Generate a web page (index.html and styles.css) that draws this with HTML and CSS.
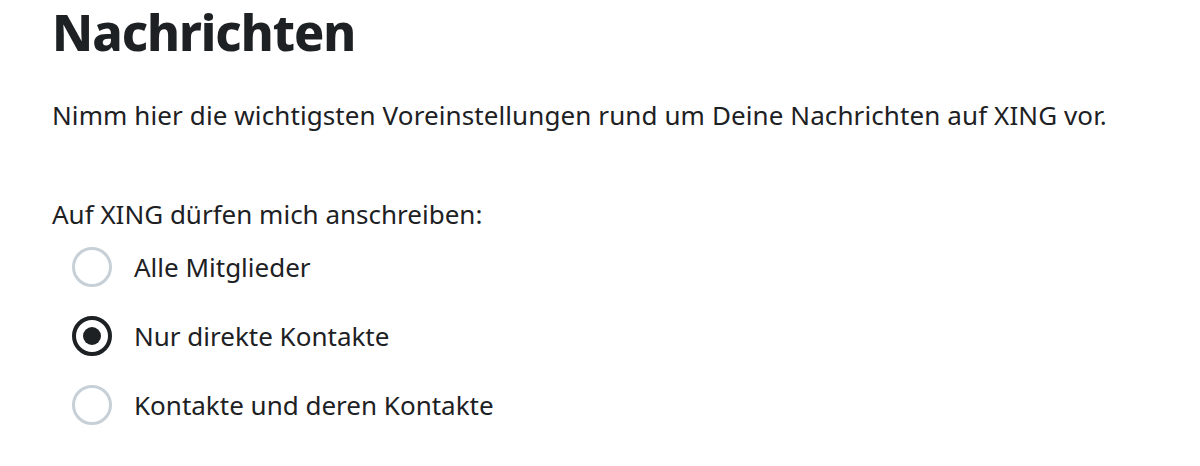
FILE: index.html
```html
<!DOCTYPE html>
<html lang="de">
<head>
<meta charset="utf-8">
<title>Nachrichten</title>
<link rel="stylesheet" href="styles.css">
</head>
<body>
<main class="page">
  <h1 class="title">Nachrichten</h1>
  <p class="intro">Nimm hier die wichtigsten Voreinstellungen rund um Deine Nachrichten auf XING vor.</p>
  <fieldset class="group">
    <legend class="legend">Auf XING dürfen mich anschreiben:</legend>
    <label class="option"><input class="radio" type="radio" name="msg"><span class="label">Alle Mitglieder</span></label>
    <label class="option"><input class="radio" type="radio" name="msg" checked><span class="label">Nur direkte Kontakte</span></label>
    <label class="option"><input class="radio" type="radio" name="msg"><span class="label">Kontakte und deren Kontakte</span></label>
  </fieldset>
</main>
</body>
</html>
```
FILE: styles.css
```css
html, body {
  margin: 0;
  padding: 0;
  background: #ffffff;
}
.page {
  padding: 0 0 0 52px;
  font-family: "Noto Sans", "Open Sans", sans-serif;
  color: #1d2124;
}
.title {
  margin: 0;
  font-size: 50px;
  line-height: 64px;
  font-weight: 800;
  letter-spacing: -1px;
}
.intro {
  margin: 34px 0 0 0;
  font-size: 26px;
  line-height: 34px;
  letter-spacing: 0.1px;
}
.group {
  border: 0;
  margin: 64px 0 0 0;
  padding: 0;
}
.legend {
  padding: 0;
  font-size: 26px;
  line-height: 36px;
}
.option {
  display: flex;
  align-items: center;
  gap: 22px;
  height: 69px;
  padding-left: 20px;
  font-size: 26px;
}
.radio {
  appearance: none;
  -webkit-appearance: none;
  margin: 0;
  width: 40px;
  height: 40px;
  border: 3px solid #c7d0d6;
  border-radius: 50%;
  box-sizing: border-box;
  background: #fff;
  display: grid;
  place-items: center;
  flex: none;
}
.radio:checked {
  border: 4px solid #1d2124;
}
.radio:checked::before {
  content: "";
  width: 18px;
  height: 18px;
  border-radius: 50%;
  background: #1d2124;
}
```
